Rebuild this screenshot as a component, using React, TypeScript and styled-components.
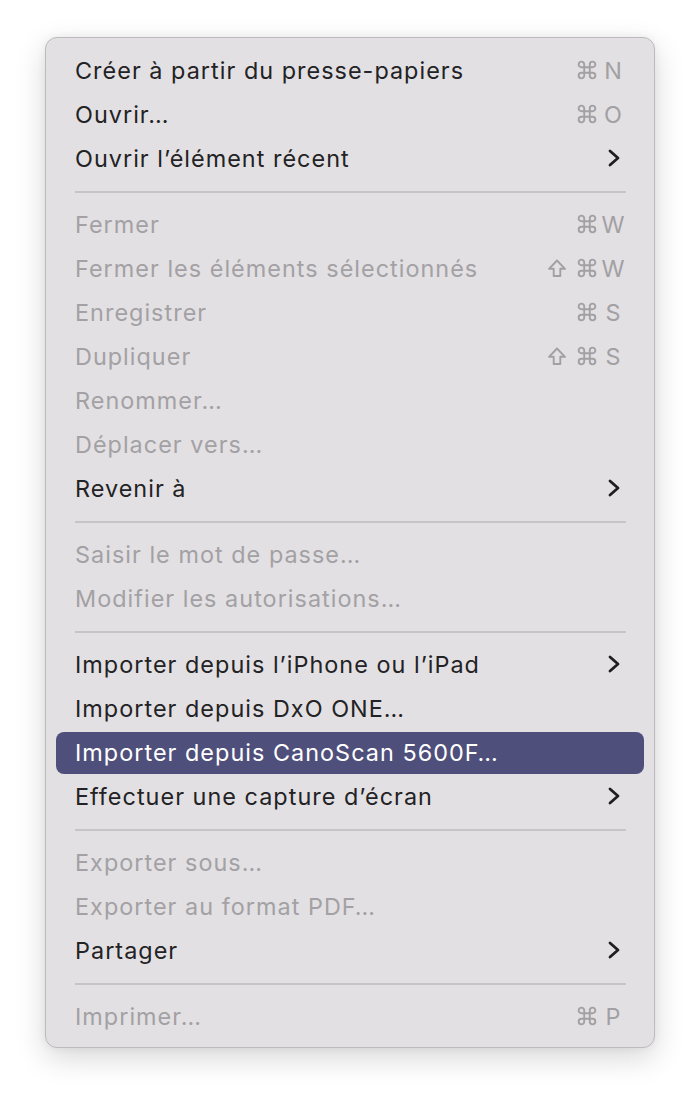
import React from "react";
import styled, { createGlobalStyle } from "styled-components";

const Global = createGlobalStyle`
  html, body { margin: 0; padding: 0; background: #ffffff; }
  body { font-family: Inter, "Noto Sans", "DejaVu Sans", sans-serif; }
`;

const Page = styled.div`
  width: 700px;
  height: 1102px;
  padding: 37px 0 0 45px;
  box-sizing: border-box;
`;

const Panel = styled.div`
  width: 610px;
  box-sizing: border-box;
  background: #e2e0e3;
  border: 1px solid #bcbabd;
  border-radius: 12px;
  padding: 11px 0 8px;
  box-shadow: 0 10px 30px rgba(0, 0, 0, 0.16), 0 0 8px rgba(0, 0, 0, 0.06);
  display: flex;
  flex-direction: column;
`;

const Row = styled.div<{ $active?: boolean; $disabled?: boolean }>`
  height: 42px;
  margin: 1px 10px;
  padding: 0 18px 2px 19px;
  box-sizing: border-box;
  border-radius: 8px;
  display: flex;
  align-items: center;
  justify-content: space-between;
  font-size: 23.4px;
  letter-spacing: 1.03px;
  color: ${(p) => (p.$active ? "#ffffff" : p.$disabled ? "#a3a1a4" : "#232224")};
  background: ${(p) => (p.$active ? "#4f4f7b" : "transparent")};
`;

const Label = styled.span`
  white-space: nowrap;
`;

const Shortcut = styled.span`
  display: flex;
  align-items: center;
  color: #a2a0a3;
  letter-spacing: 0;
`;

const Key = styled.span`
  width: 26px;
  text-align: center;
  font-size: 23.4px;
  letter-spacing: 0;
`;

const Glyph = styled.svg<{ $gap: number }>`
  display: block;
  margin-right: ${(p) => p.$gap}px;
`;

const Separator = styled.div`
  height: 22px;
  display: flex;
  align-items: center;
  padding: 0 28px 0 29px;
  &::after {
    content: "";
    flex: 1;
    height: 2px;
    background: #c6c4c7;
  }
`;

const Cmd = () => (
  <Glyph $gap={3} width="20" height="20" viewBox="0 0 18 18">
    <path
      d="M6.5 4 A2.5 2.5 0 1 0 4 6.5 H14 A2.5 2.5 0 1 0 11.5 4 V14 A2.5 2.5 0 1 0 14 11.5 H4 A2.5 2.5 0 1 0 6.5 14 Z"
      fill="none"
      stroke="#a2a0a3"
      strokeWidth="1.7"
      strokeLinejoin="round"
    />
  </Glyph>
);

const Shift = () => (
  <Glyph $gap={11} width="18" height="19" viewBox="0 0 18 19">
    <path
      d="M9 1.5 L17 9.8 H12.3 V17 H5.7 V9.8 H1 Z"
      fill="none"
      stroke="#a2a0a3"
      strokeWidth="1.9"
      strokeLinejoin="round"
    />
  </Glyph>
);

const Chevron = () => (
  <svg width="14" height="18" viewBox="0 0 14 18" style={{ marginRight: 5 }}>
    <path d="M3 2 L11 9 L3 16" fill="none" stroke="#1f1e20" strokeWidth="2.8" strokeLinecap="round" strokeLinejoin="round" />
  </svg>
);

type Item =
  | { sep: true }
  | { label: string; disabled?: boolean; active?: boolean; keys?: string[]; sub?: boolean; sep?: false };

const items: Item[] = [
  { label: "Créer à partir du presse-papiers", keys: ["⌘", "N"] },
  { label: "Ouvrir…", keys: ["⌘", "O"] },
  { label: "Ouvrir l’élément récent", sub: true },
  { sep: true },
  { label: "Fermer", disabled: true, keys: ["⌘", "W"] },
  { label: "Fermer les éléments sélectionnés", disabled: true, keys: ["⇧", "⌘", "W"] },
  { label: "Enregistrer", disabled: true, keys: ["⌘", "S"] },
  { label: "Dupliquer", disabled: true, keys: ["⇧", "⌘", "S"] },
  { label: "Renommer…", disabled: true },
  { label: "Déplacer vers…", disabled: true },
  { label: "Revenir à", sub: true },
  { sep: true },
  { label: "Saisir le mot de passe…", disabled: true },
  { label: "Modifier les autorisations…", disabled: true },
  { sep: true },
  { label: "Importer depuis l’iPhone ou l’iPad", sub: true },
  { label: "Importer depuis DxO ONE…" },
  { label: "Importer depuis CanoScan 5600F…", active: true },
  { label: "Effectuer une capture d’écran", sub: true },
  { sep: true },
  { label: "Exporter sous…", disabled: true },
  { label: "Exporter au format PDF…", disabled: true },
  { label: "Partager", sub: true },
  { sep: true },
  { label: "Imprimer…", disabled: true, keys: ["⌘", "P"] },
];

export default function App() {
  return (
    <>
      <Global />
      <Page>
        <Panel>
          {items.map((it, i) =>
            it.sep ? (
              <Separator key={i} />
            ) : (
              <Row key={i} $active={it.active} $disabled={it.disabled}>
                <Label>{it.label}</Label>
                {it.keys && (
                  <Shortcut>
                    {it.keys.map((k, j) =>
                      k === "⌘" ? <Cmd key={j} /> : k === "⇧" ? <Shift key={j} /> : <Key key={j}>{k}</Key>
                    )}
                  </Shortcut>
                )}
                {it.sub && <Chevron />}
              </Row>
            )
          )}
        </Panel>
      </Page>
    </>
  );
}
